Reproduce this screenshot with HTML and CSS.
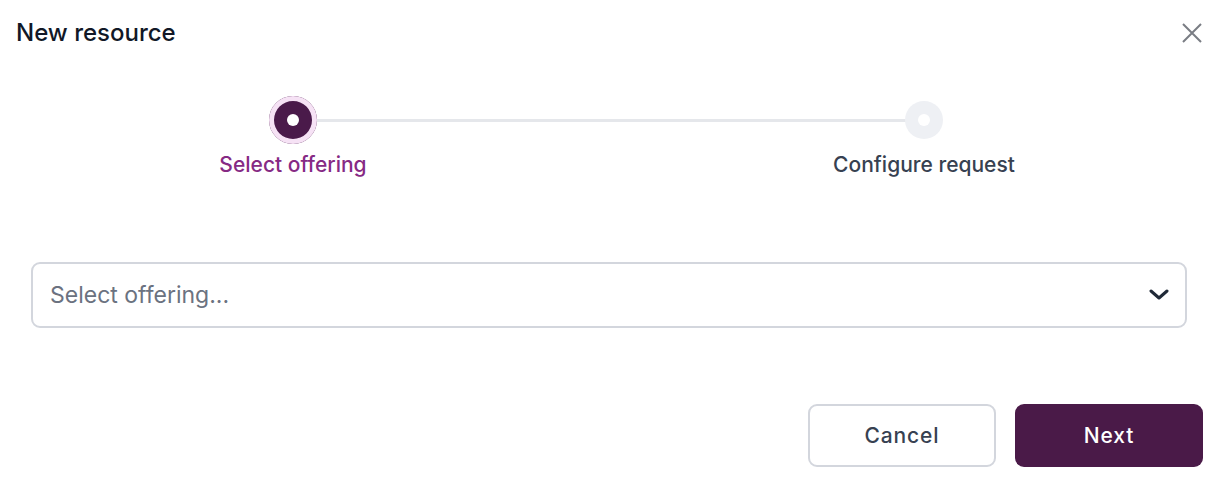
FILE: index.html
```html
<!DOCTYPE html>
<html>
<head>
<meta charset="utf-8">
<link rel="stylesheet" href="styles.css">
</head>
<body>
<div class="dialog">
  <div class="header">
    <h1 class="title">New resource</h1>
    <button class="close" aria-label="Close">
      <svg width="20" height="20" viewBox="0 0 20 20"><path d="M1 1L19 19M19 1L1 19" stroke="#7a7d84" stroke-width="2" fill="none"/></svg>
    </button>
  </div>
  <div class="stepper">
    <div class="line"></div>
    <div class="dot dot-active"><span></span></div>
    <div class="dot dot-next"><span></span></div>
    <div class="label label-active">Select offering</div>
    <div class="label label-next">Configure request</div>
  </div>
  <div class="select">
    <span class="placeholder">Select offering...</span>
    <svg width="20" height="12" viewBox="0 0 20 12"><path d="M2 2L10 9L18 2" stroke="#1f2937" stroke-width="3" fill="none" stroke-linecap="round" stroke-linejoin="round"/></svg>
  </div>
  <div class="footer">
    <button class="btn btn-cancel">Cancel</button>
    <button class="btn btn-next">Next</button>
  </div>
</div>
</body>
</html>
```

FILE: styles.css
```css
* { box-sizing: border-box; }
body {
  margin: 0;
  background: #fff;
  font-family: Inter, "Noto Sans", sans-serif;
}
.dialog {
  width: 1232px;
  height: 482px;
  padding: 19px 29px 0 16px;
}
.header {
  display: flex;
  justify-content: space-between;
  align-items: center;
  height: 28px;
}
.title {
  margin: 0;
  font-size: 24px;
  font-weight: 500;
  color: #111827;
  line-height: 28px;
}
.close {
  border: 0;
  background: none;
  padding: 0;
  width: 20px;
  height: 20px;
  margin-right: 1px;
  margin-top: 0;
  display: flex;
}
.stepper {
  display: grid;
  grid-template-columns: 200px 1fr 200px;
  grid-template-rows: 48px auto;
  margin: 49px 179px 0 177px;
  row-gap: 8px;
}
.line {
  grid-column: 1 / 4;
  grid-row: 1;
  align-self: center;
  height: 3px;
  background: #e5e7eb;
  margin: 0 100px;
}
.dot {
  grid-row: 1;
  justify-self: center;
  align-self: center;
  border-radius: 50%;
  display: flex;
  align-items: center;
  justify-content: center;
  position: relative;
}
.dot span {
  width: 12px;
  height: 12px;
  border-radius: 50%;
  background: #fff;
}
.dot-active {
  grid-column: 1;
  width: 48px;
  height: 48px;
  background: #4a1a4a;
  box-shadow: inset 0 0 0 5px #f6e2f5;
}
.dot-next {
  grid-column: 3;
  width: 38px;
  height: 38px;
  background: #eef0f4;
}
.label {
  grid-row: 2;
  text-align: center;
  font-size: 21px;
  line-height: 26px;
  font-weight: 500;
  white-space: nowrap;
}
.label-active { grid-column: 1; color: #862a84; }
.label-next { grid-column: 3; color: #374151; }
.select {
  margin: 84px 16px 0 15px;
  height: 66px;
  border: 2px solid #d3d6dd;
  border-radius: 9px;
  display: flex;
  align-items: center;
  justify-content: space-between;
  padding: 0 16px 0 17px;
}
.placeholder {
  font-size: 23px;
  color: #6b7280;
}
.footer {
  display: flex;
  justify-content: flex-end;
  gap: 19px;
  margin-top: 76px;
}
.btn {
  width: 188px;
  height: 63px;
  border-radius: 9px;
  font-family: Inter, "Noto Sans", sans-serif;
  font-size: 21px;
  font-weight: 500;
  letter-spacing: 0.9px;
}
.btn-cancel {
  background: #fff;
  border: 2px solid #d3d6dd;
  color: #374151;
}
.btn-next {
  background: #4a1a48;
  border: 0;
  color: #fff;
}
```
